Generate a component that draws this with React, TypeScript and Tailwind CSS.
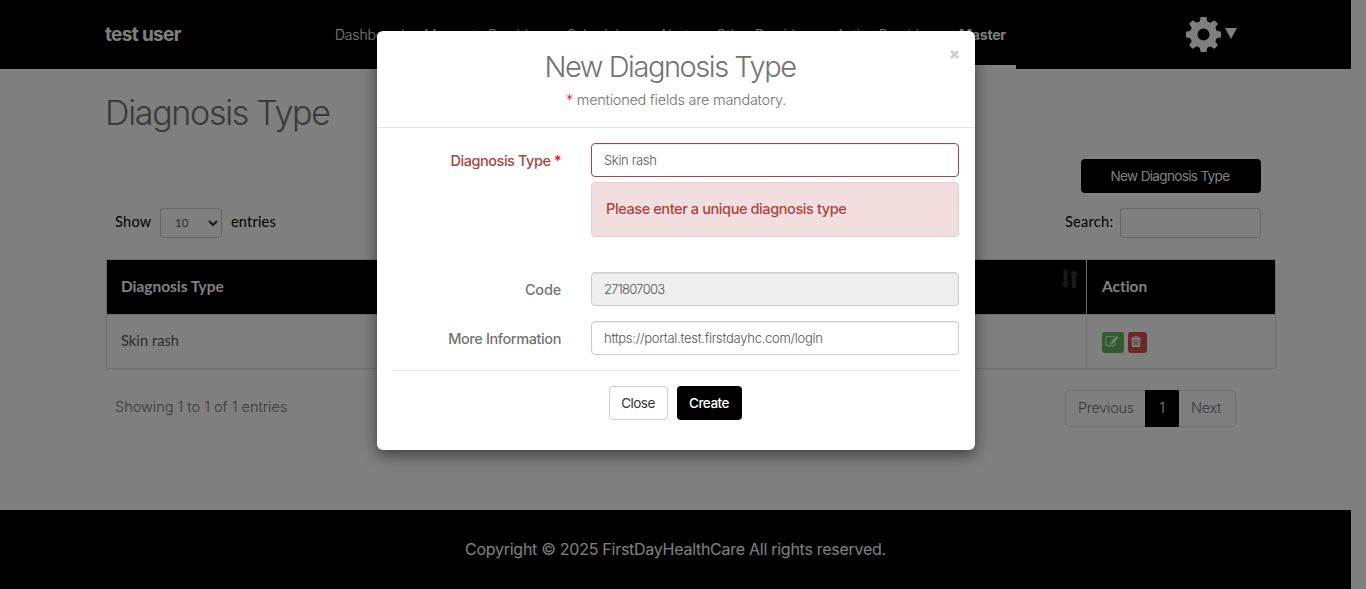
import React from "react";

const navItems: { label: string; cls: string }[] = [
  { label: "Dashboard", cls: "w-[89px]" },
  { label: "Moments", cls: "w-[64px]" },
  { label: "Providers", cls: "w-[79px]" },
  { label: "Scheduler", cls: "w-[92px]" },
  { label: "Alerts", cls: "w-[57px]" },
  { label: "Other Providers", cls: "w-[120px]" },
  { label: "Active Providers", cls: "w-[121px]" },
];

function Header() {
  return (
    <header className="flex h-[69px] bg-black text-white">
      <div className="ml-[105px] w-[230px] pt-[24px] text-[19px] leading-[22px] font-bold tracking-[-0.65px]">
        test user
      </div>
      <nav className="flex w-[681px] shrink-0 pt-[25px] text-[14px] leading-[20px] font-light tracking-[-0.2px] whitespace-nowrap">
        {navItems.map((n) => (
          <span key={n.label} className={`${n.cls} shrink-0`}>
            {n.label}
          </span>
        ))}
        <span className="-mt-[25px] flex-1 border-b-[4px] border-white pt-[25px] pl-[2px] font-bold">Master</span>
      </nav>
      <div className="ml-[170px] flex pt-[17px]">
        <svg width="35" height="35" viewBox="-17.5 -17.5 35 35" fill="#fff">
          <path
            fillRule="evenodd"
            d="M-2.800-17.500h5.600l1 4.400 3.200 1.400q3.200-2.600 4-2.400l3.200 3.200q.2.800-2.400 4l1.400 3.200 4.300.9v5.600l-4.300 1-1.400 3.200q2.600 3.200 2.400 4l-3.200 3.200q-.8.200-4-2.400l-3.200 1.400-1 4.300h-5.600l-1-4.300-3.200-1.400q-3.200 2.600-4 2.400l-3.200-3.200q-.2-.8 2.400-4l-1.400-3.200-4.300-1v-5.600l4.300-.9 1.400-3.200q-2.600-3.200-2.400-4l3.200-3.200q.8-.2 4 2.400l3.200-1.400zM0-6a6 6 0 1 0 0 12a6 6 0 1 0 0-12z"
          />
        </svg>
        <svg className="mt-[11px] ml-[4px]" width="12" height="11" viewBox="0 0 12 11" fill="#fff">
          <path d="M0 0h12L6 11z" />
        </svg>
      </div>
    </header>
  );
}

function SortIcon() {
  return (
    <svg width="18" height="18" viewBox="0 0 18 18" fill="#333">
      <path d="M2.500 0h4v13h2.500l-4.500 5-4.500-5h2.500zM11 18h4V5h2.500l-4.500-5-4.500 5h2.500z" />
    </svg>
  );
}

function DiagnosisTable() {
  return (
    <div className="mt-[21px] ml-[106px] w-[1170px] border border-[#ddd] font-[Lato,sans-serif]">
      <div className="flex h-[54px] bg-black text-[15.500px] font-bold tracking-[-0.05px] text-white">
        <div className="w-[979px] pt-[16px] pl-[14px] leading-[20px]">Diagnosis Type</div>
        <div className="-ml-[25px] w-[25px] pt-[10px]">
          <SortIcon />
        </div>
        <div className="flex-1 border-l border-[#ddd] pt-[16px] pl-[15px] leading-[20px]">Action</div>
      </div>
      <div className="flex h-[54px] border-t border-[#ddd] text-[14.500px] tracking-[0.1px] text-[#555]">
        <div className="w-[979px] pt-[16px] pl-[14px] leading-[20px]">Skin rash</div>
        <div className="flex flex-1 gap-[4px] border-l border-[#ddd] pt-[17px] pl-[15px]">
          <span className="flex h-[21px] w-[22px] rounded-[3px] bg-[#5cb85c] pt-[3px] pl-[3px]">
            <svg width="14" height="13" viewBox="0 0 1792 1792" fill="#fff">
              <path d="M888 1184l116-116-152-152-116 116v56h96v96h56zm440-720q-16-16-33 1l-350 350q-17 17-1 33t33-1l350-350q17-17 1-33zm80 594v190q0 119-84.5 203.5t-203.5 84.5h-832q-119 0-203.5-84.5t-84.5-203.5v-832q0-119 84.5-203.5t203.5-84.5h832q63 0 117 25 15 7 18 23 3 17-9 29l-49 49q-14 14-32 8-23-6-45-6h-832q-66 0-113 47t-47 113v832q0 66 47 113t113 47h832q66 0 113-47t47-113v-126q0-13 9-22l64-64q15-15 35-7t20 29zm-96-738l288 288-672 672h-288v-288zm444 132l-92 92-288-288 92-92q28-28 68-28t68 28l152 152q28 28 28 68t-28 68z" />
            </svg>
          </span>
          <span className="flex h-[21px] w-[19px] rounded-[3px] bg-[#d9534f] pt-[3px] pl-[1px]">
            <svg width="14" height="13" viewBox="0 0 1792 1792" fill="#fff">
              <path d="M704 1376v-704q0-14-9-23t-23-9h-64q-14 0-23 9t-9 23v704q0 14 9 23t23 9h64q14 0 23-9t9-23zm256 0v-704q0-14-9-23t-23-9h-64q-14 0-23 9t-9 23v704q0 14 9 23t23 9h64q14 0 23-9t9-23zm256 0v-704q0-14-9-23t-23-9h-64q-14 0-23 9t-9 23v704q0 14 9 23t23 9h64q14 0 23-9t9-23zm-544-992h448l-48-117q-7-9-17-11h-317q-10 2-17 11zm928 32v64q0 14-9 23t-23 9h-96v948q0 83-47 143.5t-113 60.500h-832q-66 0-113-58.500t-47-141.500v-952h-96q-14 0-23-9t-9-23v-64q0-14 9-23t23-9h309l70-167q15-37 54-63t79-26h320q40 0 79 26t54 63l70 167h309q14 0 23 9t9 23z" />
            </svg>
          </span>
        </div>
      </div>
    </div>
  );
}

function Page() {
  return (
    <div className="flex h-[589px] w-[1351px] flex-col">
      <Header />
      <main className="flex flex-1 flex-col">
        <h1 className="mt-[24px] ml-[105px] text-[34px] leading-[40px] font-light tracking-[-1.3px] text-[#737373]">
          Diagnosis Type
        </h1>
        <button className="mt-[26px] mr-[90px] h-[34px] w-[180px] self-end rounded-[4px] bg-black pr-[2px] text-[13.500px] tracking-[-0.65px] text-white">
          New Diagnosis Type
        </button>
        <div className="mt-[15px] flex h-[30px] items-center justify-between pr-[90px] pl-[115px] font-[Lato,sans-serif] text-[14.500px] text-black">
          <div className="flex items-center">
            <span className="w-[45px] pb-[2px] tracking-[0.3px]">Show</span>
            <span className="flex h-[30px] w-[62px] items-center justify-between rounded-[3px] border border-[#ccc] pr-[3px] pl-[14px] text-[11.500px] text-[#555]">
              10
              <svg width="10" height="7" viewBox="0 0 10 7" fill="none" stroke="#333" strokeWidth="2">
                <path d="M1 1l4 4 4-4" />
              </svg>
            </span>
            <span className="ml-[9px] pb-[2px] tracking-[0.2px]">entries</span>
          </div>
          <div className="flex items-center">
            <span className="w-[55px] pb-[2px] tracking-[0.3px]">Search:</span>
            <span className="h-[30px] w-[141px] rounded-[3px] border border-[#ccc]" />
          </div>
        </div>
        <DiagnosisTable />
        <div className="mt-[21px] flex justify-between pr-[115px] pl-[115px] text-[14.500px] leading-[20px] font-light text-[#737373]">
          <span className="pt-[7px]">Showing 1 to 1 of 1 entries</span>
          <div className="flex h-[37px] rounded-[4px] border border-[#ddd] pt-[7px] tracking-[-0.3px]">
            <span className="w-[79px] pl-[12px]">Previous</span>
            <span className="-mt-[8px] h-[37px] w-[34px] bg-black pt-[8px] text-center text-white">1</span>
            <span className="w-[56px] pl-[12px]">Next</span>
          </div>
        </div>
      </main>
      <footer className="h-[79px] bg-black pt-[29px] text-center text-[16px] leading-[20px] tracking-[-0.27px] text-white">
        Copyright © 2025 FirstDayHealthCare All rights reserved.
      </footer>
    </div>
  );
}

function Modal() {
  return (
    <div className="mt-[31px] ml-[377px] h-[419px] w-[598px] rounded-[6px] bg-white text-[#737373] shadow-[0_5px_15px_rgba(0,0,0,0.5)]">
      <div className="h-[97px] border-b border-[#e5e5e5] text-center">
        <div className="flex h-[56px] justify-center pt-[16px]">
          <h2 className="ml-[41px] flex-1 pr-[53px] text-[29px] leading-[40px] font-light tracking-[-1.45px]">
            New Diagnosis Type
          </h2>
          <svg className="mt-[3px] -ml-[25px] mr-[16px]" width="9" height="9" viewBox="0 0 9 9" stroke="#ccc" strokeWidth="2.500">
            <path d="M1 1l7 7M8 1l-7 7" />
          </svg>
        </div>
        <p className="pt-[3px] text-[14.500px] leading-[20px] font-light tracking-[-0.25px]">
          <span className="text-[red]">*</span> mentioned fields are mandatory.
        </p>
      </div>
      <div className="px-[15px] pt-[15px]">
        <div className="flex gap-[30px]">
          <label className="w-[169px] pt-[8px] text-right text-[14.500px] leading-[20px] font-medium tracking-[-0.45px] text-[#a94442]">
            Diagnosis Type <span className="text-[red]">*</span>
          </label>
          <div className="w-[368px] text-[13px]">
            <div className="h-[34px] rounded-[4px] border border-[#a94442] pt-[6px] pl-[12px] leading-[20px] font-light tracking-[-0.35px] text-[#555] shadow-[inset_0_1px_1px_rgba(0,0,0,0.075)]">
              Skin rash
            </div>
            <div className="mt-[5px] h-[55px] rounded-[4px] border border-[#ebccd1] bg-[#f2dede] pt-[16px] pl-[14px] text-[14.500px] leading-[20px] font-medium tracking-[-0.4px] text-[#a94442]">
              Please enter a unique diagnosis type
            </div>
          </div>
        </div>
        <div className="mt-[35px] flex gap-[30px]">
          <label className="w-[169px] pt-[8px] text-right text-[14.500px] leading-[20px] font-medium tracking-[-0.2px]">
            Code
          </label>
          <div className="h-[34px] w-[368px] rounded-[4px] border border-[#ccc] bg-[#eee] pt-[6px] pl-[12px] text-[13px] leading-[20px] font-light tracking-[-0.75px] text-[#555] shadow-[inset_0_1px_1px_rgba(0,0,0,0.075)]">
            271807003
          </div>
        </div>
        <div className="mt-[15px] flex gap-[30px]">
          <label className="w-[169px] pt-[8px] text-right text-[14.500px] leading-[20px] font-medium tracking-[-0.4px]">
            More Information
          </label>
          <div className="h-[34px] w-[368px] rounded-[4px] border border-[#ccc] pt-[6px] pl-[12px] text-[13px] leading-[20px] font-light tracking-[-0.27px] text-[#555] shadow-[inset_0_1px_1px_rgba(0,0,0,0.075)]">
            https://portal.test.firstdayhc.com/login
          </div>
        </div>
        <div className="mt-[15px] flex justify-center gap-[9px] border-t border-[#e5e5e5] pt-[15px] pr-[2px] text-[13.500px] tracking-[-0.5px]">
          <button className="h-[34px] w-[59px] rounded-[4px] border border-[#ccc] text-[#333]">Close</button>
          <button className="h-[34px] w-[65px] rounded-[4px] bg-black font-medium text-white">Create</button>
        </div>
      </div>
    </div>
  );
}

export default function App() {
  return (
    <div className="relative h-[589px] w-[1366px] overflow-hidden bg-white font-[Inter,sans-serif]">
      <Page />
      <div className="absolute inset-0 bg-black/50">
        <Modal />
      </div>
    </div>
  );
}
